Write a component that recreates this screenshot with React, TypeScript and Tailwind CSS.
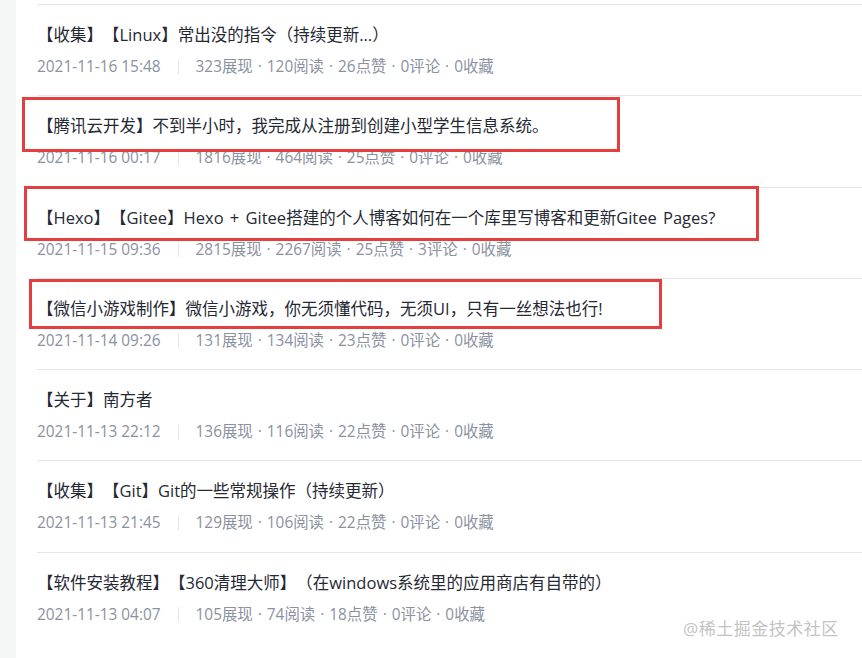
const posts = [
  { title: "【收集】【Linux】常出没的指令（持续更新...）", date: "2021-11-16 15:48", views: 323, reads: 120, likes: 26, comments: 0, stars: 0 },
  { title: "【腾讯云开发】不到半小时，我完成从注册到创建小型学生信息系统。", date: "2021-11-16 00:17", views: 1816, reads: 464, likes: 25, comments: 0, stars: 0 },
  { title: "【Hexo】【Gitee】Hexo + Gitee搭建的个人博客如何在一个库里写博客和更新Gitee Pages?", date: "2021-11-15 09:36", views: 2815, reads: 2267, likes: 25, comments: 3, stars: 0 },
  { title: "【微信小游戏制作】微信小游戏，你无须懂代码，无须UI，只有一丝想法也行!", date: "2021-11-14 09:26", views: 131, reads: 134, likes: 23, comments: 0, stars: 0 },
  { title: "【关于】南方者", date: "2021-11-13 22:12", views: 136, reads: 116, likes: 22, comments: 0, stars: 0 },
  { title: "【收集】【Git】Git的一些常规操作（持续更新）", date: "2021-11-13 21:45", views: 129, reads: 106, likes: 22, comments: 0, stars: 0 },
  { title: "【软件安装教程】【360清理大师】（在windows系统里的应用商店有自带的）", date: "2021-11-13 04:07", views: 105, reads: 74, likes: 18, comments: 0, stars: 0 },
];

const font = { fontFamily: '"Open Sans", "Noto Sans CJK SC", sans-serif' };

function Dot() {
  return <span className="mx-[5px]">·</span>;
}

export default function App() {
  return (
    <div className="flex w-[862px] h-[658px] overflow-hidden bg-white relative" style={font}>
      <div className="w-[16px] shrink-0 bg-[#f4f5f5]" />
      <div className="flex-1 pl-[21px] pt-[4px]">
        {posts.map((p) => (
          <div key={p.date} className="h-[91.3px] border-t border-[#e5e6eb] pt-[18px]">
            <div className="text-[16.5px] leading-[24px] text-[#252933] whitespace-nowrap [text-spacing-trim:space-all] [word-spacing:2px]">
              {p.title}
            </div>
            <div className="mt-[9px] flex items-center text-[15.4px] leading-[22px] text-[#8a919f] whitespace-nowrap">
              <span>{p.date}</span>
              <span className="mx-[17px] h-[15px] border-l border-[#e4e6eb]" />
              <span>
                {p.views}展现<Dot />{p.reads}阅读<Dot />{p.likes}点赞<Dot />{p.comments}评论<Dot />{p.stars}收藏
              </span>
            </div>
          </div>
        ))}
      </div>

      <div className="absolute left-[22px] top-[97px] w-[598px] h-[55px] border-[3px] border-[#e53e3e]" />
      <div className="absolute left-[24px] top-[186px] w-[735px] h-[55px] border-[3px] border-[#e53e3e]" />
      <div className="absolute left-[29px] top-[279px] w-[633px] h-[50px] border-[3px] border-[#e53e3e]" />

      <div className="absolute left-[683px] top-[616px] text-[17px] leading-[26px] text-[#c3c3c3] tracking-[0.5px]">
        @稀土掘金技术社区
      </div>
    </div>
  );
}
